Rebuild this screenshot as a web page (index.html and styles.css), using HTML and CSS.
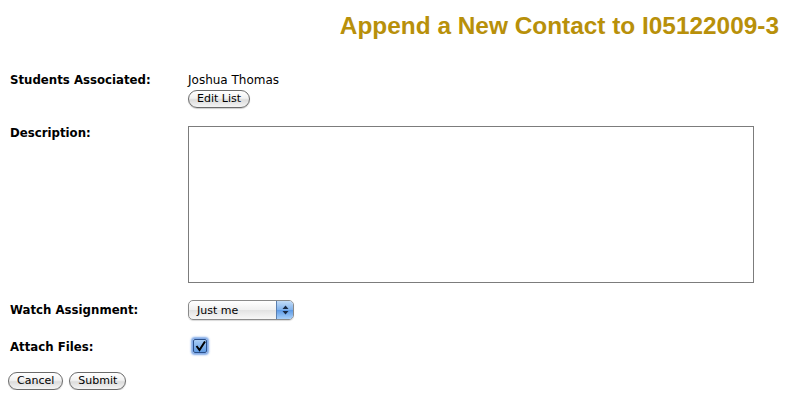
FILE: index.html
```html
<!DOCTYPE html>
<html>
<head>
<meta charset="utf-8">
<link rel="stylesheet" href="styles.css">
</head>
<body>
<h1 class="title">Append a New Contact to I05122009-3</h1>
<form class="form">
  <div class="row row-students">
    <div class="label">Students Associated:</div>
    <div class="value">
      <div class="name">Joshua Thomas</div>
      <button type="button" class="btn">Edit List</button>
    </div>
  </div>
  <div class="row row-desc">
    <div class="label">Description:</div>
    <div class="value"><textarea class="desc"></textarea></div>
  </div>
  <div class="row row-watch">
    <div class="label">Watch Assignment:</div>
    <div class="value">
      <div class="select">
        <span class="select-text">Just me</span>
        <span class="select-arrows">
          <svg width="7" height="10" viewBox="0 0 7 10"><path d="M3.5 0.5 L6.5 4 H0.5 Z M3.5 9.5 L6.5 6 H0.5 Z" fill="#1a2a44"/></svg>
        </span>
      </div>
    </div>
  </div>
  <div class="row row-attach">
    <div class="label">Attach Files:</div>
    <div class="value">
      <span class="check">
        <svg width="11" height="11" viewBox="0 0 11 11"><path d="M1.5 5 L4.5 9 L10 0.5" fill="none" stroke="#000" stroke-width="2"/></svg>
      </span>
    </div>
  </div>
  <div class="actions">
    <button type="button" class="btn">Cancel</button>
    <button type="button" class="btn">Submit</button>
  </div>
</form>
</body>
</html>
```
FILE: styles.css
```css
body {
  margin: 8px;
  background: #fff;
  font-family: "DejaVu Sans", Verdana, sans-serif;
  font-size: 12px;
  color: #000;
}
.title {
  margin: 0;
  padding-top: 4px;
  text-align: right;
  font-family: "Liberation Sans", Arial, sans-serif;
  font-weight: bold;
  font-size: 24.4px;
  line-height: 28px;
  color: #b8900a;
}
.form {
  margin-top: 33px;
}
.row {
  display: grid;
  grid-template-columns: 180px 1fr;
  align-items: start;
}
.label {
  padding-left: 2px;
  font-weight: bold;
  font-size: 11.75px;
  line-height: 14px;
}
.value {
  font-size: 12px;
}
.name {
  line-height: 14px;
  margin-bottom: 3px;
}
.btn {
  display: inline-block;
  height: 18px;
  padding: 0 8px;
  border: 1px solid #6b6b6b;
  border-radius: 9px;
  background: linear-gradient(#ffffff 0%, #f2f2f2 45%, #dcdcdc 55%, #f4f4f4 100%);
  font-family: "DejaVu Sans", Verdana, sans-serif;
  font-size: 11px;
  line-height: 16px;
  color: #000;
  box-shadow: 0 1px 1px rgba(0,0,0,0.2);
}
.row-desc {
  margin-top: 18px;
}
.desc {
  display: block;
  width: 566px;
  height: 157px;
  margin: 0;
  padding: 0;
  border: 1px solid #7c7c7c;
  box-sizing: border-box;
  resize: none;
}
.row-watch {
  margin-top: 17px;
  align-items: center;
}
.select {
  width: 106px;
  height: 20px;
  box-sizing: border-box;
  border: 1px solid #8a8a8a;
  border-radius: 5px;
  display: flex;
  align-items: center;
  background: linear-gradient(#ffffff, #f0f0f0 50%, #e2e2e2 51%, #f7f7f7);
  overflow: hidden;
  box-shadow: 0 1px 1px rgba(0,0,0,0.15);
}
.select-text {
  flex: 1;
  padding-left: 8px;
  font-size: 11px;
}
.select-arrows {
  width: 16px;
  height: 100%;
  display: flex;
  align-items: center;
  justify-content: center;
  background: linear-gradient(#c3dcf7, #7fb1ec 50%, #5d9ae6 51%, #a8d0fa);
  border-left: 1px solid #5a7fb0;
}
.row-attach {
  margin-top: 19px;
  align-items: center;
}
.check {
  display: inline-flex;
  align-items: center;
  justify-content: center;
  width: 12px;
  height: 12px;
  margin-left: 5px;
  border: 1px solid #2a4f8a;
  border-radius: 2px;
  background: linear-gradient(#a9cdf5, #5f9be3);
  box-shadow: 0 0 2px 2px rgba(70,130,220,0.7);
}
.actions {
  margin-top: 17px;
  display: flex;
  gap: 6px;
}
```
